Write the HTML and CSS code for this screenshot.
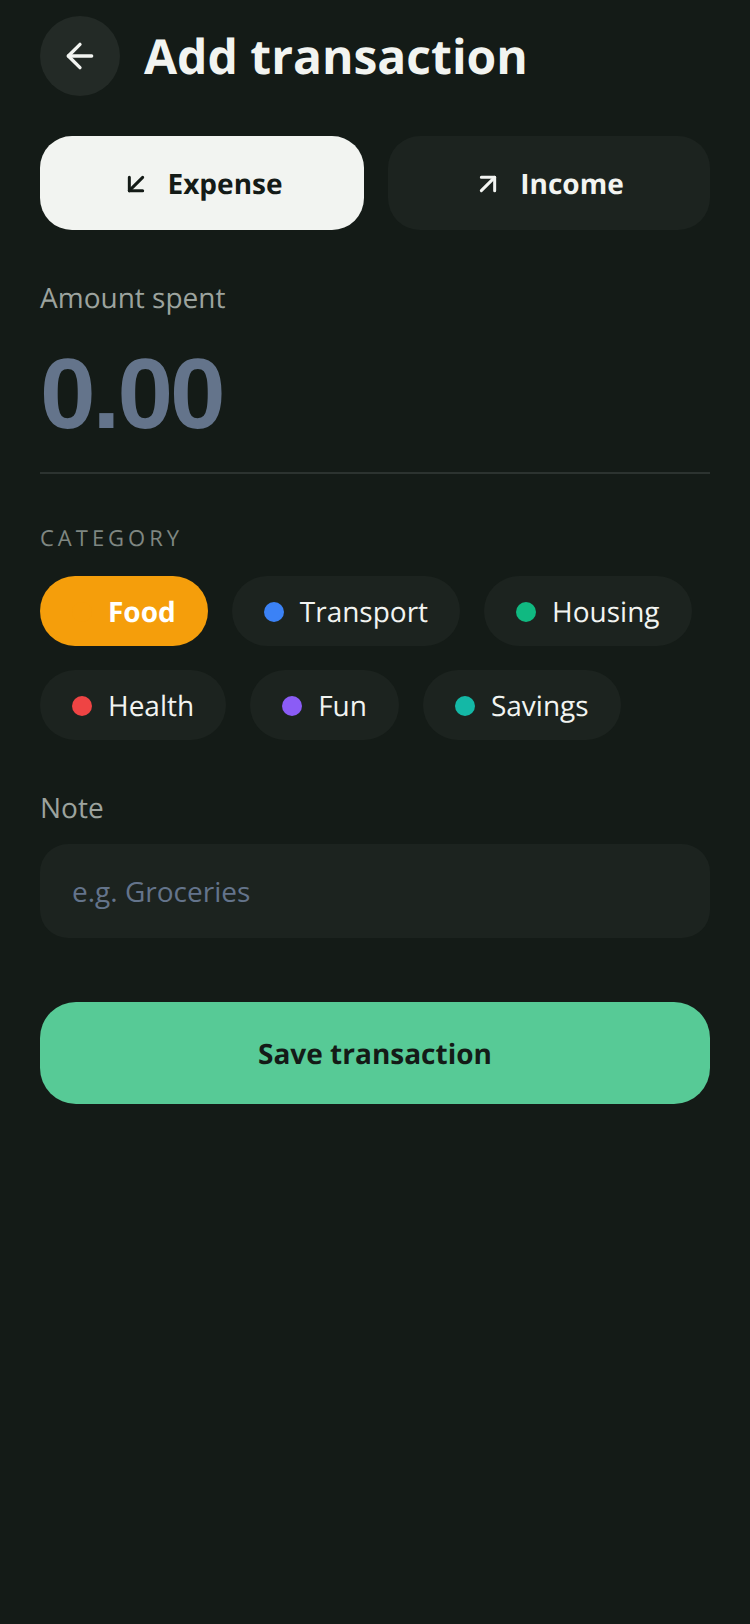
FILE: index.html
```html
<!DOCTYPE html>
<html lang="en">
<head>
  <meta charset="UTF-8" />
  <meta name="viewport" content="width=device-width, initial-scale=1.0" />
  <title>Add transaction</title>
  <link rel="stylesheet" href="styles.css">
</head>
<body>
  <div class="container">
    <div class="header">
      <button class="back">
        <svg width="40" height="40" viewBox="0 0 24 24" fill="none" stroke="currentColor" stroke-width="2" stroke-linecap="round" stroke-linejoin="round"><path d="m12 19-7-7 7-7"/><path d="M19 12H5"/></svg>
      </button>
      <h1>Add transaction</h1>
    </div>

    <div class="type-row">
      <button class="type-btn active">
        <svg width="32" height="32" viewBox="0 0 24 24" fill="none" stroke="currentColor" stroke-width="2.25" stroke-linecap="round" stroke-linejoin="round"><path d="M17 7 7 17"/><path d="M17 17H7V7"/></svg>
        Expense
      </button>
      <button class="type-btn">
        <svg width="32" height="32" viewBox="0 0 24 24" fill="none" stroke="currentColor" stroke-width="2.25" stroke-linecap="round" stroke-linejoin="round"><path d="M7 7h10v10"/><path d="M7 17 17 7"/></svg>
        Income
      </button>
    </div>

    <div class="label amount-label">Amount spent</div>
    <div class="amount">0.00</div>
    <hr />

    <div class="section-title">CATEGORY</div>
    <div class="chips">
      <button class="chip selected"><span class="dot food"></span>Food</button>
      <button class="chip"><span class="dot transport"></span>Transport</button>
      <button class="chip"><span class="dot housing"></span>Housing</button>
      <button class="chip"><span class="dot health"></span>Health</button>
      <button class="chip"><span class="dot fun"></span>Fun</button>
      <button class="chip"><span class="dot savings"></span>Savings</button>
    </div>

    <div class="label note-label">Note</div>
    <input class="note" type="text" placeholder="e.g. Groceries" />

    <button class="save">Save transaction</button>
  </div>
</body>
</html>
```

FILE: styles.css
```css
* {
  box-sizing: border-box;
}
body {
  margin: 0;
  min-height: 1624px;
  background-color: #141b17;
  font-family: "Open Sans", sans-serif;
  color: #f2f4f1;
  text-rendering: geometricPrecision;
}
button {
  font-family: inherit;
  text-rendering: inherit;
  border: none;
  cursor: pointer;
}
.container {
  padding: 16px 40px 40px;
}
.header {
  display: flex;
  align-items: center;
  gap: 24px;
}
.back {
  width: 80px;
  height: 80px;
  border-radius: 50%;
  padding: 0;
  background-color: #232a26;
  color: #f2f4f1;
  display: flex;
  align-items: center;
  justify-content: center;
}
h1 {
  margin: 0;
  padding-top: 2px;
  font-size: 48px;
  font-weight: 700;
  line-height: 76px;
}
.type-row {
  display: grid;
  grid-template-columns: 324px 1fr;
  gap: 24px;
  margin-top: 40px;
}
.type-btn {
  height: 94px;
  padding: 2px 8px 0 6px;
  border-radius: 32px;
  background-color: #1c231f;
  color: #f2f4f1;
  font-size: 28px;
  font-weight: 700;
  display: flex;
  align-items: center;
  justify-content: center;
  gap: 16px;
}
.type-btn.active {
  background-color: #f2f4f1;
  color: #141b17;
}
.label {
  font-size: 28px;
  line-height: 38px;
  color: #9ca39e;
}
.amount-label {
  margin-top: 49px;
}
.amount {
  font-family: "Liberation Sans", sans-serif;
  font-size: 100px;
  font-weight: 700;
  line-height: 120px;
  letter-spacing: -3px;
  color: #64748b;
  margin-top: 17px;
}
hr {
  border: none;
  height: 2px;
  background-color: #2c3330;
  margin: 18px 0 0;
}
.section-title {
  margin-top: 49px;
  font-size: 22px;
  line-height: 30px;
  letter-spacing: 4px;
  color: #7f8782;
}
.chips {
  display: flex;
  flex-wrap: wrap;
  gap: 24px;
  margin-top: 23px;
}
.chip {
  height: 70px;
  padding: 2px 32px 0;
  border-radius: 35px;
  background-color: #1c231f;
  color: #f2f4f1;
  font-size: 28px;
  display: flex;
  align-items: center;
  gap: 16px;
}
.chip.selected {
  background-color: #f59e0b;
  color: #fff;
  font-weight: 700;
}
.dot {
  width: 20px;
  height: 20px;
  border-radius: 50%;
}
.dot.food { background-color: #f59e0b; }
.dot.transport { background-color: #3b82f6; }
.dot.housing { background-color: #10b981; }
.dot.health { background-color: #ef4444; }
.dot.fun { background-color: #8b5cf6; }
.dot.savings { background-color: #14b8a6; }
.note-label {
  margin-top: 49px;
}
.note {
  display: block;
  width: 100%;
  height: 94px;
  margin-top: 17px;
  padding: 0 32px;
  border: none;
  border-radius: 28px;
  background-color: #1c231f;
  color: #f2f4f1;
  font-family: inherit;
  font-size: 28px;
}
.note::placeholder {
  color: #64748b;
  opacity: 1;
}
.save {
  display: block;
  width: 100%;
  height: 102px;
  margin-top: 64px;
  padding: 2px 0 0;
  border-radius: 36px;
  background-color: #57ca96;
  color: #141b17;
  font-size: 28px;
  font-weight: 700;
}
```
